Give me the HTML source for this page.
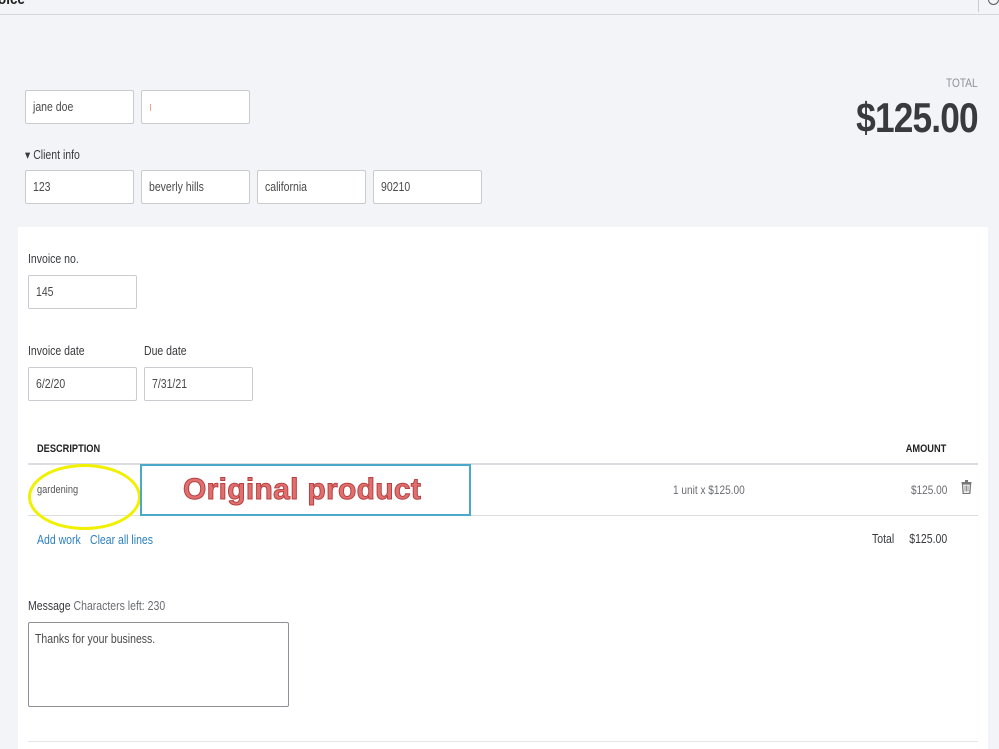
<!DOCTYPE html>
<html><head><meta charset="utf-8"><style>
*{box-sizing:border-box;margin:0;padding:0}
body{width:999px;height:749px;overflow:hidden;background:#f3f4f8;font-family:"Liberation Sans",sans-serif;color:#393a3d;position:relative;font-size:12px}
.a{position:absolute;white-space:nowrap}
.n{transform:scaleX(.84);transform-origin:left center}
.r{transform:scaleX(.84);transform-origin:right center}
.inp{position:absolute;background:#fff;border:1px solid #c9cbcf;border-radius:2px;height:34px;padding:0 7px;line-height:32px;font-size:12.5px;color:#4a4a4a}
.inp span{display:inline-block;transform:scaleX(.84);transform-origin:left center}
.lbl{position:absolute;font-size:12.5px;color:#393a3d;white-space:nowrap;transform:scaleX(.84);transform-origin:left center}
</style></head><body>
<div class="a" style="left:0;top:0;width:999px;height:15px;border-bottom:1px solid #d6d7db;background:#f3f4f8"></div>
<div class="a n" style="left:-2px;top:-9px;font-weight:bold;font-size:16px;color:#222">oice</div>
<div class="a" style="left:978px;top:0;width:1px;height:12px;background:#ccc"></div>
<div class="a" style="left:988px;top:-6px;width:11px;height:11px;border:1.5px solid #555;border-radius:50%"></div>

<div class="inp" style="left:25px;top:90px;width:109px"><span>jane doe</span></div>
<div class="inp" style="left:141px;top:90px;width:109px"><span style="color:#e8a080">ı</span></div>
<div class="lbl" style="left:25px;top:147px">▾ Client info</div>
<div class="inp" style="left:25px;top:170px;width:109px"><span>123</span></div>
<div class="inp" style="left:141px;top:170px;width:109px"><span>beverly hills</span></div>
<div class="inp" style="left:257px;top:170px;width:109px"><span>california</span></div>
<div class="inp" style="left:373px;top:170px;width:109px"><span>90210</span></div>

<div class="a r" style="right:21px;top:76px;font-size:12px;color:#8d9096">TOTAL</div>
<div class="a r" style="right:21px;top:94px;font-size:42px;font-weight:bold;color:#393a3d;letter-spacing:-1px">$125.00</div>

<div class="a" style="left:18px;top:227px;width:970px;height:522px;background:#fff"></div>
<div class="lbl" style="left:28px;top:252px">Invoice no.</div>
<div class="inp" style="left:28px;top:275px;width:109px"><span>145</span></div>
<div class="lbl" style="left:28px;top:344px">Invoice date</div>
<div class="lbl" style="left:144px;top:344px">Due date</div>
<div class="inp" style="left:28px;top:367px;width:109px"><span>6/2/20</span></div>
<div class="inp" style="left:144px;top:367px;width:109px"><span>7/31/21</span></div>

<div class="a n" style="left:37px;top:443px;font-size:11px;font-weight:bold;color:#222">DESCRIPTION</div>
<div class="a r" style="right:53px;top:443px;font-size:11px;font-weight:bold;color:#222">AMOUNT</div>
<div class="a" style="left:28px;top:463px;width:950px;height:2px;background:#dcdde0"></div>
<div class="a" style="left:28px;top:515px;width:950px;height:1px;background:#dcdde0"></div>
<div class="a n" style="left:37px;top:484px;font-size:11px;color:#555">gardening</div>
<div class="a" style="left:28px;top:464px;width:113px;height:66px;border:3px solid #f0f000;border-radius:50%"></div>
<div class="a" style="left:140px;top:464px;width:331px;height:52px;border:2px solid #4aa8c8"></div>
<div class="a" style="left:183px;top:473px;font-family:'Liberation Sans',sans-serif;font-size:30px;font-weight:bold;color:#e07070;-webkit-text-stroke:1px #b84040;letter-spacing:0.3px">Original product</div>
<div class="a n" style="left:673px;top:483px;color:#6b6c72">1 unit x $125.00</div>
<div class="a r" style="right:52px;top:483px;color:#6b6c72">$125.00</div>
<svg class="a" style="left:961px;top:480px" width="11" height="14" viewBox="0 0 11 14"><rect x="0.5" y="2" width="10" height="1.5" fill="#777"/><rect x="4" y="0" width="3" height="2" fill="#777"/><path d="M1.5 4h8l-.7 9.5h-6.6z" fill="none" stroke="#777" stroke-width="1.3"/><path d="M4 5.5v6M5.5 5.5v6M7 5.5v6" stroke="#777" stroke-width=".8"/></svg>
<div class="a n" style="left:37px;top:533px;color:#2c7fbf;font-size:12.5px">Add work</div>
<div class="a n" style="left:90px;top:533px;color:#2c7fbf;font-size:12.5px">Clear all lines</div>
<div class="a n" style="left:872px;top:532px;color:#393a3d;font-size:12.5px">Total</div>
<div class="a r" style="right:52px;top:532px;color:#393a3d;font-size:12.5px">$125.00</div>

<div class="lbl" style="left:28px;top:599px">Message <span style="color:#6b6c72">Characters left: 230</span></div>
<div class="a" style="left:28px;top:622px;width:261px;height:85px;border:1px solid #8d9096;border-radius:2px;padding:9px 6px;font-size:12.5px;color:#4a4a4a"><div class="n">Thanks for your business.</div></div>
<div class="a" style="left:28px;top:741px;width:950px;height:1px;background:#e4e5e8"></div>
</body></html>
